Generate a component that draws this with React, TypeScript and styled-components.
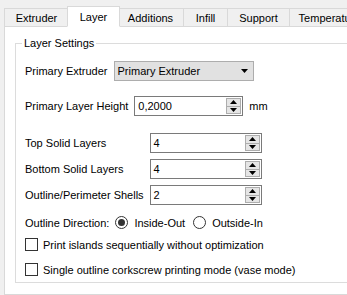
import React from "react";
import styled, { createGlobalStyle } from "styled-components";

const Global = createGlobalStyle`
  html, body { margin: 0; padding: 0; background: #f0f0f0; }
  body { font-family: "Liberation Sans", Arial, sans-serif; font-size: 11px; color: #000; }
  * { box-sizing: border-box; }
`;

const Window = styled.div`
  width: 347px;
  height: 295px;
  overflow: hidden;
  background: #f0f0f0;
  padding: 6px 0 0 4px;
  display: flex;
  flex-direction: column;
`;

const TabBar = styled.div`
  display: flex;
  align-items: flex-end;
  height: 21px;
  position: relative;
  z-index: 1;
`;

const Tab = styled.div<{ $active?: boolean; $first?: boolean; $w: number }>`
  flex: none;
  width: ${(p) => p.$w}px;
  height: ${(p) => (p.$active ? "21px" : "19px")};
  margin: ${(p) => (p.$active ? "0 -2px" : "0")};
  display: flex;
  align-items: center;
  justify-content: center;
  background: ${(p) => (p.$active ? "#fff" : "#f0f0f0")};
  border: 1px solid #d9d9d9;
  border-bottom: ${(p) => (p.$active ? "1px solid #fff" : "1px solid #d9d9d9")};
  border-left-width: ${(p) => (p.$first || p.$active ? "1px" : "0")};
  position: relative;
  z-index: ${(p) => (p.$active ? 2 : 1)};
  padding-top: ${(p) => (p.$active ? "0" : "1px")};
  white-space: nowrap;
`;

const Panel = styled.div`
  flex: 1;
  margin-top: -1px;
  background: #fff;
  border: 1px solid #d9d9d9;
  border-right: none;
  padding: 16px 0 0 10px;
`;

const Group = styled.div`
  position: relative;
  border: 1px solid #dcdcdc;
  border-right: none;
  padding: 0 0 0 9px;
  height: 240px;
  display: flex;
  flex-direction: column;
  align-items: flex-start;
`;

const Legend = styled.span`
  position: absolute;
  left: 6px;
  top: -7px;
  padding: 0 2px;
  line-height: 13px;
  background: #fff;
`;

const Row = styled.div<{ $mt?: number }>`
  display: flex;
  align-items: center;
  gap: 6px;
  margin-top: ${(p) => p.$mt ?? 0}px;
`;

const Grid = styled.div`
  display: grid;
  grid-template-columns: auto 112px;
  justify-content: start;
  column-gap: 6px;
  row-gap: 6px;
  align-items: center;
  margin-top: 17px;
`;

const Combo = styled.div`
  width: 140px;
  height: 20px;
  background: #e1e1e1;
  border: 1px solid #adadad;
  display: flex;
  align-items: center;
  justify-content: space-between;
  padding: 0 5px 0 3px;
`;

const Spin = styled.div<{ $w: number }>`
  width: ${(p) => p.$w}px;
  height: 20px;
  border: 1px solid #7a7a7a;
  background: #fff;
  display: flex;
  align-items: center;
  padding: 0 1px 0 3px;
`;

const SpinValue = styled.span`
  flex: 1;
`;

const SpinButtons = styled.div`
  width: 15px;
  height: 16px;
  display: flex;
  flex-direction: column;
`;

const SpinBtn = styled.div`
  flex: 1;
  background: #e5e5e5;
  border: 1px solid #adadad;
  display: flex;
  align-items: center;
  justify-content: center;
  & + & { border-top: none; }
`;

const Radio = styled.span<{ $checked?: boolean }>`
  width: 13px;
  height: 13px;
  border-radius: 50%;
  border: 1px solid #333;
  background: #fff;
  display: inline-flex;
  align-items: center;
  justify-content: center;
  &::after {
    content: "";
    width: 7px;
    height: 7px;
    border-radius: 50%;
    background: ${(p) => (p.$checked ? "#333" : "transparent")};
  }
`;

const RadioLabel = styled.label`
  display: inline-flex;
  align-items: center;
  gap: 6px;
  margin-right: 2px;
`;

const Check = styled.span`
  width: 13px;
  height: 13px;
  border: 1px solid #333;
  background: #fff;
  flex: none;
`;

const CheckRow = styled.label<{ $mt: number }>`
  display: flex;
  align-items: center;
  gap: 5px;
  margin-top: ${(p) => p.$mt}px;
`;

const Arrow = ({ up }: { up?: boolean }) => (
  <svg width="7" height="4" viewBox="0 0 7 4">
    <path d={up ? "M0 4 L3.5 0 L7 4 Z" : "M0 0 L7 0 L3.5 4 Z"} fill="#000" />
  </svg>
);

const SpinBox = ({ w, value }: { w: number; value: string }) => (
  <Spin $w={w}>
    <SpinValue>{value}</SpinValue>
    <SpinButtons>
      <SpinBtn><Arrow up /></SpinBtn>
      <SpinBtn><Arrow /></SpinBtn>
    </SpinButtons>
  </Spin>
);

const tabs: [string, number][] = [
  ["Extruder", 65],
  ["Layer", 53],
  ["Additions", 66],
  ["Infill", 44],
  ["Support", 62],
  ["Temperature", 80],
];

export default function App() {
  return (
    <>
      <Global />
      <Window>
        <TabBar>
          {tabs.map(([t, w], i) => (
            <Tab key={t} $w={w} $active={t === "Layer"} $first={i === 0}>{t}</Tab>
          ))}
        </TabBar>
        <Panel>
          <Group>
            <Legend>Layer Settings</Legend>
            <Row $mt={17}>
              <span>Primary Extruder</span>
              <Combo>
                <span>Primary Extruder</span>
                <Arrow />
              </Combo>
            </Row>
            <Row $mt={15}>
              <span>Primary Layer Height</span>
              <SpinBox w={109} value="0,2000" />
              <span>mm</span>
            </Row>
            <Grid>
              <span>Top Solid Layers</span>
              <SpinBox w={112} value="4" />
              <span>Bottom Solid Layers</span>
              <SpinBox w={112} value="4" />
              <span>Outline/Perimeter Shells</span>
              <SpinBox w={112} value="2" />
            </Grid>
            <Row $mt={11}>
              <span>Outline Direction:</span>
              <RadioLabel><Radio $checked />Inside-Out</RadioLabel>
              <RadioLabel><Radio />Outside-In</RadioLabel>
            </Row>
            <CheckRow $mt={9}><Check />Print islands sequentially without optimization</CheckRow>
            <CheckRow $mt={12}><Check />Single outline corkscrew printing mode (vase mode)</CheckRow>
          </Group>
        </Panel>
      </Window>
    </>
  );
}
